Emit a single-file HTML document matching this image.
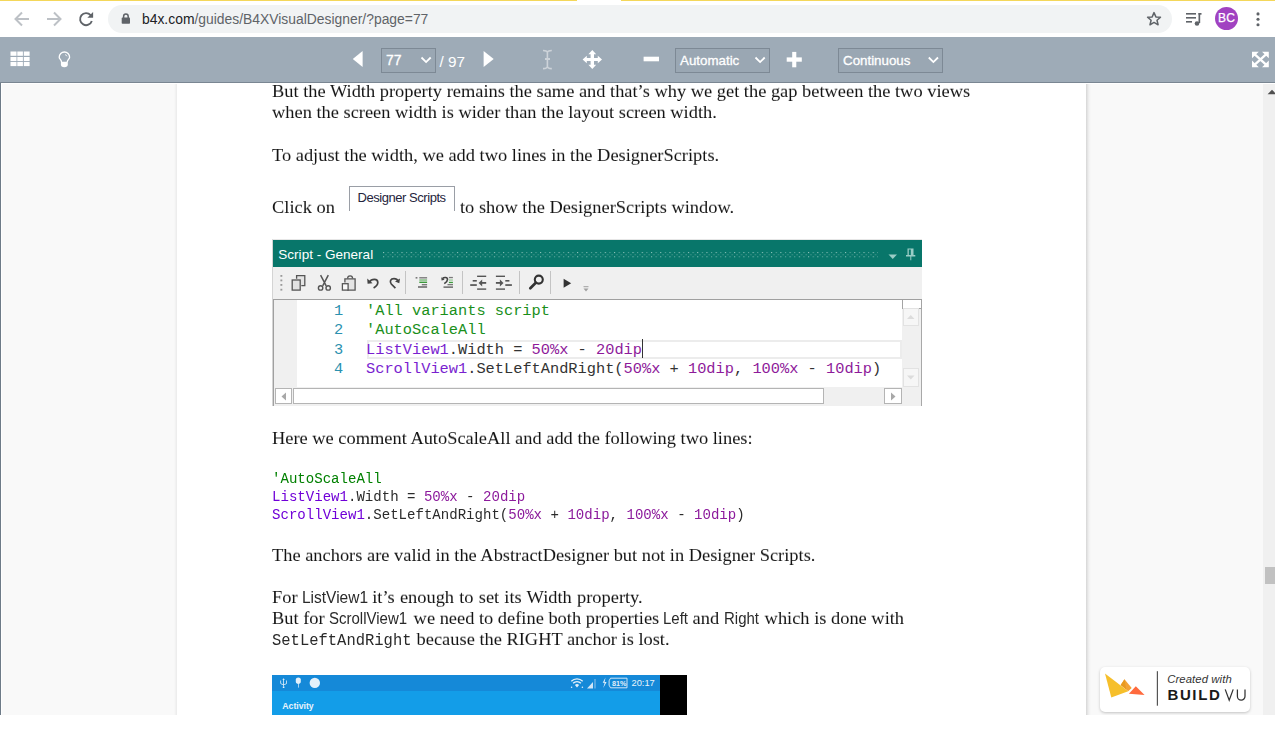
<!DOCTYPE html>
<html><head><meta charset="utf-8">
<style>
*{margin:0;padding:0;box-sizing:border-box}
html,body{width:1275px;height:750px;overflow:hidden;background:#fff;font-family:"Liberation Sans",sans-serif}
.a{position:absolute}
#chrome{position:absolute;left:0;top:0;width:1275px;height:37px;background:#fff}
#load1{position:absolute;left:0;top:0;width:577px;height:1px;background:#f4d75a}
#load2{position:absolute;left:621px;top:0;width:654px;height:1px;background:#f4d75a}
#pill{position:absolute;left:108px;top:5px;width:1064px;height:28px;border-radius:14px;background:#f1f3f4}
#url{position:absolute;left:142px;top:10px;font-size:13.88px;line-height:18px;color:#5f6368;white-space:pre}
#url b{font-weight:normal;color:#202124}
#avatar{position:absolute;left:1215px;top:7px;width:23px;height:23px;border-radius:50%;background:#a142c1;color:#fff;font-size:12px;line-height:23px;text-align:center;letter-spacing:0.2px;-webkit-text-stroke:0.25px #fff}
#tb{position:absolute;left:0;top:37px;width:1275px;height:46px;background:#9eabb7;border-bottom:1px solid #7a8692}
.sel{position:absolute;top:11px;height:25px;border:1px solid #7d8995;background:#9aa7b3;color:#fff;font-size:13.33px;line-height:23px;padding-left:4px;white-space:pre;-webkit-text-stroke:0.3px #fff}
#main{position:absolute;left:0;top:83px;width:1275px;height:632px;background:#f9f9f9;overflow:hidden}
#page{position:absolute;left:177px;top:0;width:909px;height:632px;background:#fff}
#vscroll{position:absolute;left:1263px;top:0;width:12px;height:632px;background:#f0f0f0}
.t,.code,.s,.m{will-change:transform}
.t{transform:scaleY(0.93);transform-origin:0 16.2px;margin-top:-0.7px}
.s{transform:translateY(1px) scaleY(1.04);transform-origin:0 15.4px}
.m{transform:translateY(1px) scaleY(1.1);transform-origin:0 14.1px}
.t{position:absolute;white-space:pre;font-family:"Liberation Serif",serif;font-size:18.4px;line-height:20px;color:#141414}
.code{position:absolute;white-space:pre;font-family:"Liberation Mono",monospace;font-size:14.07px;line-height:18px;color:#2b2b2b}
.s{position:absolute;white-space:pre;font-family:"Liberation Sans",sans-serif;font-size:15px;line-height:20px;color:#2a2a2a}
.m{position:absolute;white-space:pre;font-family:"Liberation Mono",monospace;font-size:15px;line-height:20px;color:#000}
.ed{position:absolute;white-space:pre;font-family:"Liberation Mono",monospace;font-size:15.33px;line-height:18px;color:#333}
.cv2{color:#7a1fd0}.cn2{color:#8e1a9a}
.cm{color:#008000}.cv{color:#7000d8}.cn{color:#8c1a9c}
</style></head><body>
<div id="chrome">
 <div id="load1"></div><div id="load2"></div>
 <svg class="a" style="left:0;top:0" width="108" height="37">
  <g fill="none" stroke="#bdc1c6" stroke-width="2">
   <path d="M29 19H16M22 12.5L15.5 19L22 25.5"/>
   <path d="M47 19H60M54 12.5L60.5 19L54 25.5"/>
  </g>
  <path d="M90.6 15.2A6 6 0 1 0 91.8 21" fill="none" stroke="#5f6368" stroke-width="1.9"/>
  <path d="M93.1 11.9v5.8h-5.8z" fill="#5f6368"/>
 </svg>
 <div id="pill"></div>
 <svg class="a" style="left:118px;top:10px" width="16" height="18"><path d="M5.6 8V6.4a2.3 2.3 0 0 1 4.6 0V8" fill="none" stroke="#5f6368" stroke-width="1.5"/><rect x="3.7" y="7.6" width="8.3" height="6.2" rx="0.8" fill="#5f6368"/></svg>
 <div id="url"><b>b4x.com</b>/guides/B4XVisualDesigner/?page=77</div>
 <svg class="a" style="left:1145px;top:10px" width="18" height="18"><path d="M9 2.6l1.9 4.3 4.6.4-3.5 3 1.1 4.5L9 12.4l-4 2.4 1.1-4.5-3.5-3 4.6-.4z" fill="none" stroke="#5f6368" stroke-width="1.5" stroke-linejoin="round"/></svg>
 <svg class="a" style="left:1184px;top:10px" width="20" height="18"><g fill="#5f6368"><rect x="2" y="3" width="10" height="1.6"/><rect x="2" y="7" width="10" height="1.6"/><rect x="2" y="11" width="6" height="1.6"/><rect x="14.5" y="3" width="1.7" height="10"/><rect x="14.5" y="3" width="3" height="1.7"/><circle cx="13" cy="13.5" r="2.3"/></g></svg>
 <div id="avatar">BC</div>
 <svg class="a" style="left:1252px;top:10px" width="12" height="18"><g fill="#5f6368"><circle cx="6" cy="3.9" r="1.55"/><circle cx="6" cy="9.3" r="1.55"/><circle cx="6" cy="14.7" r="1.55"/></g></svg>
</div>

<div id="tb">
 <svg class="a" style="left:0;top:0" width="1275" height="46">
  <g fill="#fff">
   <rect x="10.5" y="14.5" width="6" height="4.3"/><rect x="17.3" y="14.5" width="5.6" height="4.3"/><rect x="23.8" y="14.5" width="5.8" height="4.3"/>
   <rect x="10.5" y="20" width="6" height="4.1"/><rect x="17.3" y="20" width="5.6" height="4.1"/><rect x="23.8" y="20" width="5.8" height="4.1"/>
   <rect x="10.5" y="25" width="6" height="4.1"/><rect x="17.3" y="25" width="5.6" height="4.1"/><rect x="23.8" y="25" width="5.8" height="4.1"/>
  </g>
  <path d="M61.5 25C61.5 23 59.2 22 59.2 20.2A5.2 5.2 0 0 1 69.6 20.2C69.6 22 67.3 23 67.3 25" fill="none" stroke="#fff" stroke-width="1.3"/>
  <path d="M60.9 24.7h6.9v2.8a3.45 2.7 0 0 1-6.9 0z" fill="#fff"/>
  <path d="M65 17.6a2.8 2.8 0 0 1 2 1.7" fill="none" stroke="#fff" stroke-width="0.8"/>
  <path d="M352.8 22L362.6 14V30Z" fill="#fff"/>
  <path d="M493.7 22L483.6 14V30Z" fill="#fff"/>
  <text x="439.5" y="30" fill="#fff" font-family="Liberation Sans" font-size="15.3">/ 97</text>
  <g fill="none" stroke="#cdd3d9" stroke-width="1.6">
   <path d="M547.4 15V30M543 13.5c2.5 0 4.4.8 4.4 2.3c0-1.5 1.9-2.3 4.4-2.3M543 31.6c2.5 0 4.4-.8 4.4-2.3c0 1.5 1.9 2.3 4.4 2.3"/>
  </g><rect x="545" y="21" width="5" height="2" fill="#cdd3d9"/>
  <g fill="#fff">
   <path d="M592.3 13L596.2 17.3H594V21H597.8V18.7L602 22.5L597.8 26.3V24H594V27.8H596.2L592.3 32L588.4 27.8H590.6V24H586.8V26.3L582.6 22.5L586.8 18.7V21H590.6V17.3H588.4Z"/>
   <rect x="643.6" y="19.7" width="15.4" height="4.6"/>
   <rect x="786.7" y="20.4" width="15.1" height="4.3"/><rect x="792.2" y="14.9" width="4.1" height="15.4"/>
   <path d="M1252 14.7h6.8L1252 21.3zM1268.8 14.7h-6.8L1268.8 21.3zM1252 30.2h6.8L1252 23.6zM1268.8 30.2h-6.8L1268.8 23.6z"/>
  </g><g stroke="#fff" stroke-width="2.3" fill="none"><path d="M1254.2 16.8L1266.6 28.1M1266.6 16.8L1254.2 28.1"/>
  </g>
 </svg>
 <div class="sel" style="left:381px;width:55px;font-size:14px">77</div>
 <div class="sel" style="left:675px;width:95px">Automatic</div>
 <div class="sel" style="left:838px;width:105px">Continuous</div>
 <svg class="a" style="left:0;top:0" width="1275" height="46">
  <g fill="none" stroke="#fff" stroke-width="1.8">
   <path d="M421.5 20.5l4.6 4.6 4.6-4.6"/>
   <path d="M755.5 20.5l4.6 4.6 4.6-4.6"/>
   <path d="M928.8 20.5l4.6 4.6 4.6-4.6"/>
  </g>
 </svg>
</div>

<div id="main">
 <div style="position:absolute;left:0;top:0;width:1275px;height:1px;background:#fff;z-index:2"></div>
 <div style="position:absolute;left:0;top:0;width:1px;height:632px;background:#6e7b88;z-index:3"></div>
 <div style="position:absolute;left:1px;top:0;width:1px;height:632px;background:#fff;z-index:3"></div>
 <div id="page"></div>
 <div style="position:absolute;left:174px;top:0;width:3px;height:632px;background:linear-gradient(to right,rgba(0,0,0,0),rgba(0,0,0,0.06))"></div>
 <div style="position:absolute;left:1086px;top:0;width:5px;height:632px;background:linear-gradient(to right,rgba(0,0,0,0.14),rgba(0,0,0,0.03) 60%,rgba(0,0,0,0))"></div>
 <div id="vscroll"></div>
 <svg style="position:absolute;left:1263px;top:0" width="12" height="632"><path d="M4.6 11.2L9 6.8 13.4 11.2z" fill="#505050"/><rect x="2" y="484" width="10" height="17" fill="#c1c1c1"/></svg>
 <div id="badge" style="position:absolute;left:1100px;top:583.8px;width:150px;height:45px;background:#fff;border-radius:5px;box-shadow:0 1px 3px rgba(0,0,0,0.22)">
  <svg style="position:absolute;left:0;top:0" width="150" height="45">
   <path d="M5 6.6L11.3 30.5 28.2 24.2z" fill="#f6bf2b"/>
   <path d="M20.7 17.9L24.5 12.2 31.7 21 28.2 24.2z" fill="#f3a233"/>
   <path d="M24.5 12.2L20.7 17.9 26.2 22.6z" fill="#e89a1e"/>
   <path d="M28.9 26.7L35.8 19.2 44.6 28z" fill="#ff6a3d"/>
   <rect x="56.8" y="4.2" width="1.2" height="34.5" fill="#555"/>
   <text x="67.2" y="15.9" font-family="Liberation Sans" font-style="italic" font-size="11.3" fill="#333" textLength="64.5">Created with</text>
   <text x="67.5" y="33.2" font-family="Liberation Sans" font-weight="bold" font-size="15" letter-spacing="1.6" fill="#1a1a1a">BUILD</text>
   <path d="M125.2 22.4L129.2 33.2 133.2 22.4M137.4 22.4V29.2A3.8 3.9 0 0 0 145 29.2V22.4" fill="none" stroke="#333" stroke-width="1.25"/>
  </svg>
 </div>
 <div id="c" style="position:absolute;left:0;top:-82px;width:1275px;height:800px">
  <div class="t" style="left:272px;top:80.8px">But the Width property remains the same and that’s why we get the gap between the two views</div>
  <div class="t" style="left:272px;top:101.8px">when the screen width is wider than the layout screen width.</div>
  <div class="t" style="left:272px;top:144.8px">To adjust the width, we add two lines in the DesignerScripts.</div>
  <div class="t" style="left:272px;top:196.8px">Click on</div>
  <div class="t" style="left:459.5px;top:196.8px">to show the DesignerScripts window.</div>

  <div id="win" style="position:absolute;left:272px;top:238px;width:650px;height:167px;background:#f0f0f0;border-left:1px solid #d4d4d4;border-top:1px solid #e6e6e6">
   <div style="position:absolute;left:0;top:0;width:649px;height:27px;background:#08766a"></div>
   <div style="position:absolute;left:5.3px;top:5.9px;font-family:'Liberation Sans',sans-serif;font-size:13.55px;line-height:18px;color:#fff;white-space:pre">Script - General</div>
   <svg style="position:absolute;left:0;top:0" width="649" height="60">
    <defs><pattern id="dots" x="110" y="12" width="9.24" height="6" patternUnits="userSpaceOnUse">
     <rect x="0" y="0" width="1.1" height="1.1" fill="#8dc2ba"/><rect x="4.62" y="0" width="1.1" height="1.1" fill="#5ba69c"/>
     <rect x="2.31" y="2.2" width="1.1" height="1.1" fill="#4e9d93"/><rect x="6.93" y="2.2" width="1.1" height="1.1" fill="#4e9d93"/>
     <rect x="0" y="4.2" width="1.1" height="1.1" fill="#7ab8af"/><rect x="4.62" y="4.2" width="1.1" height="1.1" fill="#5ba69c"/>
    </pattern></defs>
    <rect x="110" y="12" width="495" height="6" fill="url(#dots)"/>
    <path d="M615.5 14.5h8.5l-4.25 4.5z" fill="#9acdc6"/>
    <path d="M634.5 8.5h6v6.5h1.8v1.5h-4v3.8h-1v-3.8h-4.3v-1.5h1.5z" fill="#9acdc6"/>
    <path d="M635.8 9.5h2v5.5h-2z" fill="#08766a"/>
    <!-- grip -->
    <g fill="#9a9a9a"><rect x="7.4" y="35" width="1.9" height="1.8"/><rect x="7.4" y="39.5" width="1.9" height="1.8"/><rect x="7.4" y="44" width="1.9" height="1.8"/><rect x="7.4" y="48.8" width="1.9" height="1.8"/></g>
    <!-- copy -->
    <path d="M23.6 38.8V35.6h8.2v10h-3.5" fill="#e4e4e4" stroke="#555" stroke-width="1.3"/>
    <rect x="19.2" y="40" width="8" height="10.1" fill="#e2e2e2" stroke="#555" stroke-width="1.3"/>
    <!-- cut -->
    <g fill="none" stroke="#555">
     <path d="M47.6 35.2L53.2 45.8M55.3 35.2L49.7 45.8" stroke-width="1.5"/>
     <circle cx="47.6" cy="47.9" r="2.2" stroke-width="1.4"/><circle cx="55.2" cy="47.9" r="2.2" stroke-width="1.4"/>
    </g>
    <!-- paste -->
    <path d="M74.2 50.1h7.9V38.9h-10.2v3.6" fill="#e4e4e4" stroke="#555" stroke-width="1.3"/>
    <path d="M74.6 38.6a2.5 2.8 0 0 1 5 0" fill="none" stroke="#555" stroke-width="1.3"/>
    <rect x="69.4" y="43.7" width="5.7" height="6.4" fill="#fafafa" stroke="#555" stroke-width="1.3"/>
    <!-- undo redo -->
    <g fill="none" stroke="#444" stroke-width="1.7">
     <path d="M96.3 42.3C98.5 38.6 104.8 38.3 104.8 42.6C104.8 45 103 46.6 100.6 47.9"/>
     <path d="M122.4 48.2L118.3 44C116.3 41.6 117.6 38.6 121 38.6C123.2 38.6 124.6 39.8 125.2 41.2"/>
    </g>
    <path d="M94.2 38.6L94.6 43.8L99.6 43.3z" fill="#444"/>
    <path d="M127 38.6L126.3 43.2L122 41.6z" fill="#444"/>
    <!-- separators -->
    <g fill="#c4c4c4"><rect x="132" y="31" width="1" height="23"/><rect x="189" y="31" width="1" height="23"/><rect x="246" y="31" width="1" height="23"/><rect x="277" y="31" width="1" height="23"/></g>
    <!-- comment -->
    <g fill="#7a7a7a"><rect x="142.6" y="37" width="1.8" height="1.6"/><rect x="146.3" y="37.1" width="7.8" height="1.4"/><rect x="148.8" y="44" width="5.3" height="1.4"/><rect x="145" y="46.1" width="9.1" height="1.8"/></g>
    <rect x="146.3" y="39.2" width="7.8" height="1.7" fill="#8fc48f"/>
    <rect x="146.3" y="41.6" width="7.8" height="1.4" fill="#3c9a3c"/>
    <!-- uncomment -->
    <path d="M169.5 38.6C171 37 174.5 37 174.5 39.5C174.5 41 173 42.5 171.3 43.6" fill="none" stroke="#444" stroke-width="1.6"/>
    <path d="M168.2 37.2L168.6 40.6L171.6 39.8z" fill="#444"/>
    <g fill="#7a7a7a"><rect x="175.9" y="36.9" width="4" height="1.3"/><rect x="174.5" y="44" width="5.5" height="1.3"/><rect x="170.5" y="46.3" width="9.5" height="1.7"/></g>
    <rect x="175.9" y="39.3" width="4" height="1.5" fill="#a5cfa5"/>
    <rect x="175.9" y="41.8" width="4" height="1.3" fill="#3c9a3c"/>
    <!-- outdent indent -->
    <g fill="#555">
     <rect x="204.1" y="35.6" width="9.1" height="1.4"/><rect x="204.1" y="48.4" width="9.1" height="1.4"/>
     <rect x="199.7" y="40" width="4.1" height="1.6"/><rect x="197.2" y="44.2" width="6.6" height="1.7"/>
     <rect x="207.5" y="42" width="5.7" height="1.8"/>
     <path d="M205.6 42.9L209.2 39.4V46.4z"/>
     <rect x="222.9" y="35.6" width="9.1" height="1.4"/><rect x="222.9" y="48.4" width="9.1" height="1.4"/>
     <rect x="232.3" y="40" width="4.1" height="1.6"/><rect x="232.3" y="44.2" width="6.6" height="1.7"/>
     <rect x="222.9" y="42" width="5.7" height="1.8"/>
     <path d="M230.5 42.9L226.9 39.4V46.4z"/>
    </g>
    <!-- search -->
    <circle cx="265.8" cy="39.6" r="4" fill="none" stroke="#333" stroke-width="2.1"/>
    <path d="M262.8 42.8L257.3 48.2" stroke="#333" stroke-width="2.7" fill="none" stroke-linecap="round"/>
    <!-- play -->
    <path d="M290.6 38.7L298.2 43.2L290.6 47.7z" fill="#333"/>
    <g fill="#a0a0a0"><rect x="310.5" y="46.2" width="5" height="1"/><path d="M310.5 48.6h5l-2.5 2.8z"/></g>
   </svg>
  </div>
  <!-- editor -->
  <div style="position:absolute;left:273px;top:298px;width:649px;height:107px;border-top:1px solid #a0a0a0;border-left:1px solid #a0a0a0;background:#fff;overflow:hidden">
   <div style="position:absolute;left:0;top:0;width:23px;height:88px;background:#f0f0f0"></div>
   <div style="position:absolute;left:92.5px;top:40px;width:535px;height:19px;border:2px solid #ececec"></div>
   <div style="position:absolute;left:367.6px;top:38.5px;width:1.4px;height:19px;background:#333"></div>
   <div class="ed" style="left:60px;top:1.7px;color:#2b91af">1</div>
   <div class="ed" style="left:60px;top:21px;color:#2b91af">2</div>
   <div class="ed" style="left:60px;top:41.1px;color:#2b91af">3</div>
   <div class="ed" style="left:60px;top:60.4px;color:#2b91af">4</div>
   <div class="ed" style="left:92px;top:1.7px;color:#1a8f1a">'All variants script</div>
   <div class="ed" style="left:92px;top:21px;color:#1a8f1a">'AutoScaleAll</div>
   <div class="ed" style="left:92px;top:41.1px"><span class="cv2">ListView1</span>.Width = <span class="cn2">50%x</span> - <span class="cn2">20dip</span></div>
   <div class="ed" style="left:92px;top:60.4px"><span class="cv2">ScrollView1</span>.SetLeftAndRight(<span class="cn2">50%x</span> + <span class="cn2">10dip</span>, <span class="cn2">100%x</span> - <span class="cn2">10dip</span>)</div>
   <!-- vscroll -->
   <div style="position:absolute;left:628px;top:0;width:20px;height:106px;background:#f0f0f0;border-right:1px solid #a8a8a8"></div>
   <div style="position:absolute;left:628px;top:0;width:20px;height:9px;background:#fff;border:1px solid #a4a4a4;border-top:none"></div>
   <div style="position:absolute;left:629px;top:8px;width:16px;height:18px;background:#f6f6f6;border:1px solid #e2e2e2"></div>
   <div style="position:absolute;left:629px;top:68px;width:16px;height:19px;background:#f6f6f6;border:1px solid #e2e2e2"></div>
   <svg style="position:absolute;left:629px;top:10px" width="18" height="80"><path d="M4 9h7.5l-3.75-4z" fill="#dcdcdc"/><path d="M4 65.5h7.5l-3.75 4z" fill="#dcdcdc"/></svg>
   <!-- hscroll -->
   <div style="position:absolute;left:0;top:87px;width:628px;height:19px;background:#f0f0f0"></div>
   <div style="position:absolute;left:1px;top:88px;width:17px;height:16px;background:#fff;border:1px solid #b4b4b4"></div>
   <div style="position:absolute;left:19px;top:88px;width:531px;height:16px;background:#fff;border:1px solid #b4b4b4"></div>
   <div style="position:absolute;left:609.5px;top:88px;width:18px;height:16px;background:#fff;border:1px solid #b4b4b4"></div>
   <svg style="position:absolute;left:0;top:87px" width="628" height="19"><path d="M12 5.5v8l-4.5-4z" fill="#a8a8a8"/><path d="M617 5.5v8l4.5-4z" fill="#a8a8a8"/></svg>
  </div>

  <!-- designer scripts button -->
  <div style="position:absolute;left:349px;top:185px;width:106px;height:25px;border:1px solid #9a9ea6;border-bottom:none;background:#fff"></div>
  <div style="position:absolute;left:357.5px;top:189px;font-family:'Liberation Sans',sans-serif;font-size:13px;line-height:16px;color:#24243c;white-space:pre;letter-spacing:-0.45px">Designer Scripts</div>
  <!-- phone image -->
  <div style="position:absolute;left:272px;top:674px;width:388px;height:16px;background:#1589d8"></div>
  <div style="position:absolute;left:272px;top:690px;width:388px;height:30px;background:#139de8"></div>
  <div style="position:absolute;left:660px;top:674px;width:27px;height:46px;background:#000"></div>
  <div style="position:absolute;left:282.3px;top:699.3px;font-family:'Liberation Sans',sans-serif;font-weight:bold;font-size:8.7px;line-height:12px;color:#eaf4fb;white-space:pre">Activity</div>
  <div style="position:absolute;left:631.5px;top:676.5px;font-family:'Liberation Sans',sans-serif;font-size:9.3px;line-height:11px;color:#eaf4fb;white-space:pre">20:17</div>
  <svg style="position:absolute;left:272px;top:674px" width="388" height="16">
   <g fill="#e4f0fa" stroke="none">
    <circle cx="42.8" cy="7.9" r="5.2"/>
    <path d="M11.6 3.2l-1.3 1.6h0.9v6.5h0.8V4.8h0.9z"/>
    <path d="M8.3 5.5v2.5c0 1.2 1.2 1.8 3.3 1.8s3.3-.6 3.3-1.8V5.5h-.8V8c0 .6-1 1-2.5 1s-2.5-.4-2.5-1V5.5z"/>
    <circle cx="11.6" cy="12.2" r="0.9"/>
    <path d="M23.8 4.5c0-1.3 1.2-2.1 2.5-2.1s2.5.8 2.5 2.1v2.3c0 1.3-1.2 2.1-2.5 2.1s-2.5-.8-2.5-2.1z"/>
    <rect x="26" y="8.8" width="0.7" height="3.8"/>
    <g fill="none" stroke="#e4f0fa" stroke-width="1.3"><path d="M299.3 6.3a8 8 0 0 1 11.4 0"/><path d="M301.1 8.3a5.3 5.3 0 0 1 7.8 0"/></g><path d="M302.9 10.1a2.8 2.8 0 0 1 4.2 0L305 12.4z"/><g fill="#e4f0fa"><circle cx="299.6" cy="12.3" r="0.8"/><circle cx="310.4" cy="12.3" r="0.8"/></g>
    <path d="M315 13.5l6-6.5v6.5z" opacity="0.9"/><rect x="322.5" y="4" width="1" height="9.5" opacity="0.6"/>
    <path d="M333.5 2.5l-2.8 5.2h2l-1.5 5.3 3.4-6h-2z"/>
    <path d="M338.5 3.2h16.5v9.6h-16.5l-1.4-2.6v-4.4z" fill="none" stroke="#e4f0fa" stroke-width="0.9"/>
    <text x="340" y="10.8" font-family="Liberation Sans" font-size="7.2" font-weight="bold" fill="#e4f0fa">81%</text>
   </g>
  </svg>
  <div class="t" style="left:272px;top:427.8px">Here we comment AutoScaleAll and add the following two lines:</div>
  <div class="code" style="left:272px;top:468.8px"><span class="cm">'AutoScaleAll</span></div>
  <div class="code" style="left:272px;top:486.8px"><span class="cv">ListView1</span>.Width = <span class="cn">50%x</span> - <span class="cn">20dip</span></div>
  <div class="code" style="left:272px;top:504.8px"><span class="cv">ScrollView1</span>.SetLeftAndRight(<span class="cn">50%x</span> + <span class="cn">10dip</span>, <span class="cn">100%x</span> - <span class="cn">10dip</span>)</div>
  <div class="t" style="left:272px;top:544.8px">The anchors are valid in the AbstractDesigner but not in Designer Scripts.</div>
  <div class="t" style="left:272px;top:586.3px">For </div>
  <div class="s" style="left:302px;top:586.3px;font-size:15.5px">ListView1</div>
  <div class="t" style="left:367px;top:586.3px;word-spacing:0.6px"> it’s enough to set its Width property.</div>
  <div class="t" style="left:272px;top:607.3px">But for </div>
  <div class="s" style="left:329px;top:607.3px">ScrollView1</div>
  <div class="t" style="left:409px;top:607.3px"> we need to define both properties </div>
  <div class="s" style="left:662.5px;top:607.3px">Left</div>
  <div class="t" style="left:688px;top:607.3px"> and </div>
  <div class="s" style="left:724px;top:607.3px">Right</div>
  <div class="t" style="left:760px;top:607.3px"> which is done with</div>
  <div class="m" style="left:272px;top:628.8px;font-size:15.5px;color:#2a2a2a">SetLeftAndRight</div>
  <div class="t" style="left:412px;top:628.8px"> because the RIGHT anchor is lost.</div>
 </div>
</div>
</body></html>
